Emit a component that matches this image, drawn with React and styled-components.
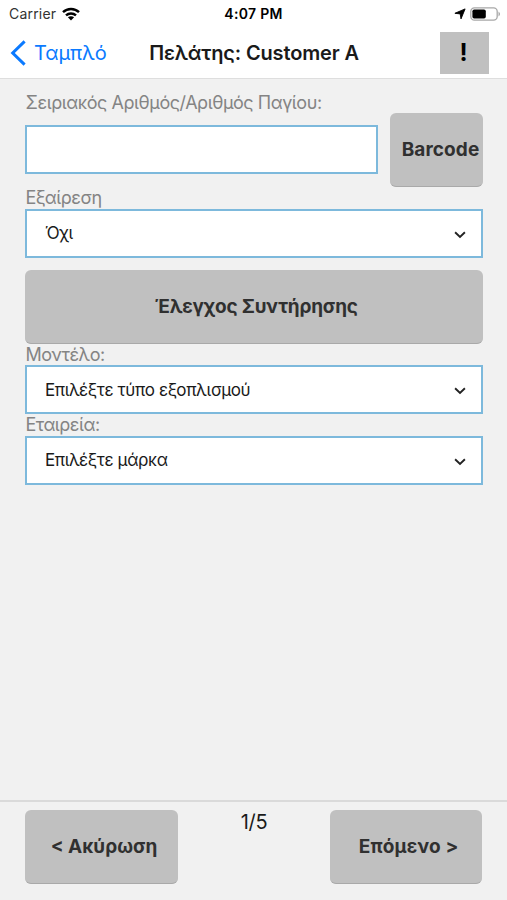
import React from "react";
import styled, { createGlobalStyle } from "styled-components";

const Chevron = () => {
    return (
        <svg width="12" height="8" viewBox="0 0 12 8" aria-hidden="true">
            <path
                d="M1.1 1.3L6 6L10.9 1.3"
                fill="none"
                stroke="#222222"
                strokeWidth="1.9"></path>
        </svg>
    );
};

const StatusBar = () => {
    return (
        <StatusWrap>
            <Carrier>
                <span>Carrier</span>
                <svg width="18" height="14" viewBox="0 0 18 14" aria-hidden="true">
                    <g fill="none" stroke="#000000" strokeWidth="2.4">
                        <path d="M1 5.2C5.4 0.9 12.6 0.9 17 5.2"></path>
                        <path d="M4 8.4C6.8 5.8 11.2 5.8 14 8.4"></path>
                    </g>
                    <path d="M9 13.4L5.9 10.3C7.6 8.8 10.4 8.8 12.1 10.3Z"></path>
                </svg>
            </Carrier>
            <Clock>4:07 PM</Clock>
            <Indicators>
                <svg width="12" height="12" viewBox="0 0 12 12" aria-hidden="true">
                    <path
                        d="M11.1 0.9L7 10.9L6.2 5.9L0.9 5.3Z"
                        stroke="#000000"
                        strokeWidth="0.9"
                        strokeLinejoin="round"></path>
                </svg>
                <svg width="31" height="14" viewBox="0 0 31 14" aria-hidden="true">
                    <rect
                        x="0.8"
                        y="0.8"
                        width="26.4"
                        height="12.4"
                        rx="3.6"
                        fill="none"
                        stroke="#a8a8a8"
                        strokeWidth="1.3"></rect>
                    <rect x="2.4" y="2.4" width="13.4" height="9.2" rx="1.8"></rect>
                    <path d="M28.5 4.6Q31.6 7 28.5 9.4Z" fill="#a8a8a8"></path>
                </svg>
            </Indicators>
        </StatusWrap>
    );
};

const SelectField = ({ label, value }) => {
    return (
        <div>
            <Label>{label}</Label>
            <Select type="button">
                <SelectValue>{value}</SelectValue>
                <Chevron />
            </Select>
        </div>
    );
};

const App = () => {
    return (
        <Screen>
            <GlobalStyle />
            <Header>
                <StatusBar />
                <NavBar>
                    <BackBtn>
                        <svg width="16" height="26" viewBox="0 0 16 26" aria-hidden="true">
                            <path
                                d="M14.6 1.4L2.7 13L14.6 24.6"
                                fill="none"
                                stroke="#0b7aff"
                                strokeWidth="3"></path>
                        </svg>
                        <span>Ταμπλό</span>
                    </BackBtn>
                    <Title>Πελάτης: Customer A</Title>
                    <AlertBtn>!</AlertBtn>
                </NavBar>
            </Header>
            <Form>
                <SerialRow>
                    <SerialField>
                        <SerialLabel htmlFor="serial">
                            Σειριακός Αριθμός/Αριθμός Παγίου:
                        </SerialLabel>
                        <Input id="serial" type="text" />
                    </SerialField>
                    <Button $width="93px" $indent="9px" $spacing="0.1px">
                        Barcode
                    </Button>
                </SerialRow>
                <SelectField label="Εξαίρεση" value="Όχι" />
                <CheckWrap>
                    <Button $width="100%" $indent="5px" $spacing="-0.2px">
                        Έλεγχος Συντήρησης
                    </Button>
                </CheckWrap>
                <SelectField label="Μοντέλο:" value="Επιλέξτε τύπο εξοπλισμού" />
                <SelectField label="Εταιρεία:" value="Επιλέξτε μάρκα" />
            </Form>
            <Footer>
                <Button $width="153px" $indent="5px">
                    &lt; Ακύρωση
                </Button>
                <PageCount>1/5</PageCount>
                <Button $width="152.5px" $indent="5px" $spacing="0.2px">
                    Επόμενο &gt;
                </Button>
            </Footer>
        </Screen>
    );
};

const GlobalStyle = createGlobalStyle`
    * {
        box-sizing: border-box;
    }
    body {
        margin: 0;
        background: #f1f1f1;
        font-family: Inter, "Liberation Sans", sans-serif;
    }
`;
const Screen = styled.div`
    display: flex;
    flex-direction: column;
    height: 900px;
    color: #1a1a1a;
`;
const Header = styled.header`
    height: 79px;
    background: #ffffff;
    border-bottom: 1px solid #dedede;
`;
const StatusWrap = styled.div`
    display: grid;
    grid-template-columns: 1fr auto 1fr;
    align-items: center;
    height: 27px;
    padding: 0 7px 0 9px;
    color: #000000;
    font-size: 14px;
`;
const Carrier = styled.div`
    display: flex;
    align-items: center;
    gap: 6px;
    color: #333333;
    letter-spacing: 0.2px;
`;
const Clock = styled.div`
    margin-right: 2px;
    font-weight: 600;
    letter-spacing: 0.3px;
`;
const Indicators = styled.div`
    display: flex;
    align-items: center;
    justify-content: flex-end;
    gap: 4px;
    margin-right: -1px;
`;
const NavBar = styled.div`
    display: grid;
    grid-template-columns: 130px 1fr 121px;
    align-items: center;
    height: 51px;
    padding: 0 18px 0 10px;
`;
const BackBtn = styled.button`
    all: unset;
    display: flex;
    align-items: center;
    gap: 8px;
    color: #0b7aff;
    font-size: 20px;
    letter-spacing: -0.1px;
    cursor: pointer;
`;
const Title = styled.h1`
    margin: 0;
    font-size: 20px;
    font-weight: 600;
    letter-spacing: -0.15px;
    text-align: center;
    white-space: nowrap;
`;
const AlertBtn = styled.button`
    all: unset;
    box-sizing: border-box;
    justify-self: end;
    width: 49px;
    height: 42px;
    padding-right: 2px;
    background: #c0c0c0;
    color: #000000;
    font-size: 24px;
    font-weight: 700;
    line-height: 42px;
    text-align: center;
    cursor: pointer;
`;
const Form = styled.main`
    flex: 1;
    padding: 13px 24.5px 0 25px;
`;
const SerialRow = styled.div`
    display: flex;
    align-items: flex-end;
    justify-content: space-between;
    height: 95px;
`;
const SerialField = styled.div`
    width: 353px;
    height: 95px;
`;
const Label = styled.div`
    height: 21.6px;
    padding-left: 0.5px;
    color: #848484;
    font-size: 18px;
    letter-spacing: -0.5px;
    line-height: 22.8px;
`;
const SerialLabel = styled.label`
    display: block;
    height: 33px;
    padding-left: 0.5px;
    color: #848484;
    font-size: 18px;
    letter-spacing: -0.45px;
    line-height: 22px;
    white-space: nowrap;
`;
const Input = styled.input`
    display: block;
    width: 100%;
    height: 49px;
    border: 2px solid #7db9dc;
    background: #ffffff;
    font: inherit;
    outline: none;
`;
const Select = styled.button`
    display: flex;
    align-items: center;
    justify-content: space-between;
    width: 100%;
    height: 49px;
    padding: 0 15px 0 18px;
    border: 2px solid #7db9dc;
    background: #ffffff;
    color: #1a1a1a;
    font-family: inherit;
    font-size: 17px;
    letter-spacing: -0.38px;
    cursor: pointer;

    & > svg {
        margin-top: 3px;
    }
`;
const SelectValue = styled.span`
    white-space: nowrap;
`;
const Button = styled.button`
    display: flex;
    align-items: center;
    justify-content: center;
    width: ${(props) => props.$width};
    height: 74px;
    padding: 0 0 0 ${(props) => props.$indent};
    border: none;
    border-bottom: 1.5px solid #a9a9a9;
    border-radius: 6px;
    background: #c0c0c0;
    color: #303030;
    font-family: inherit;
    font-size: 19px;
    font-weight: 700;
    letter-spacing: ${(props) => props.$spacing || "normal"};
    white-space: nowrap;
    cursor: pointer;
`;
const CheckWrap = styled.div`
    padding: 12px 0 0;
`;
const Footer = styled.footer`
    display: flex;
    justify-content: space-between;
    height: 100px;
    padding: 8px 24.5px 0 25px;
    border-top: 2px solid #dadada;
`;
const PageCount = styled.div`
    font-size: 20px;
    letter-spacing: -0.3px;
    line-height: 24px;
`;

export default App;
